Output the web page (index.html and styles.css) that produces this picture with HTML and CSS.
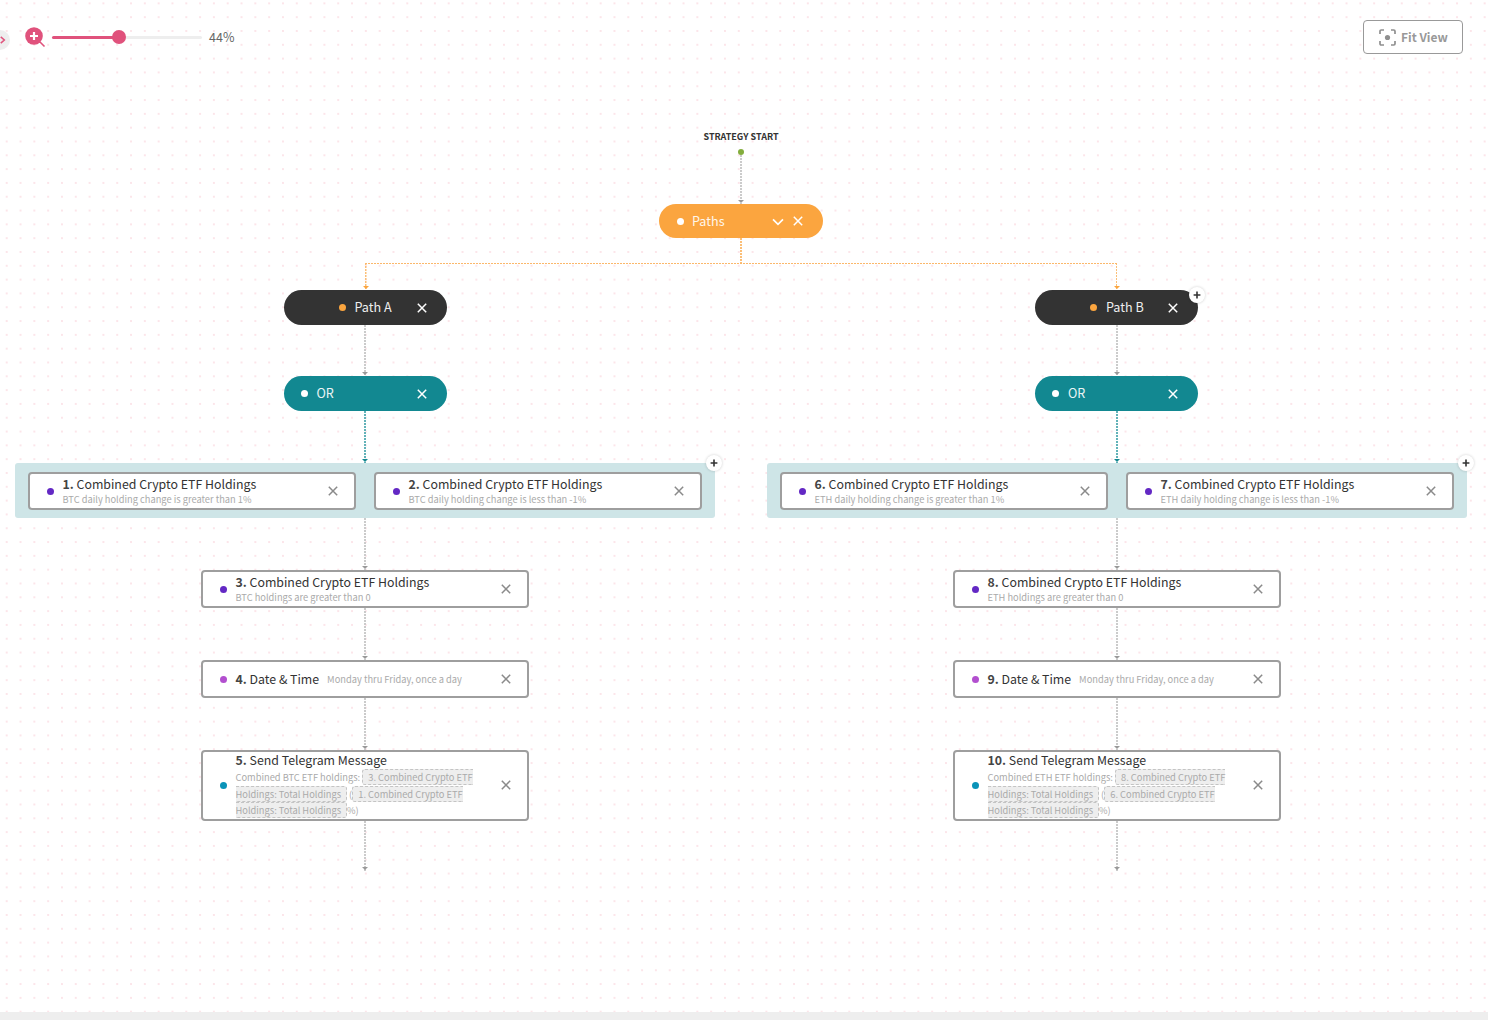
FILE: index.html
```html
<!DOCTYPE html>
<html lang="en">
<head>
<meta charset="utf-8">
<title>Strategy</title>
<link rel="stylesheet" href="styles.css">
</head>
<body>
<svg class="defs" width="0" height="0" aria-hidden="true">
  <symbol id="i-x" viewBox="0 0 10 10"><path d="M.8.8l8.4 8.4M9.2.8L.8 9.2" fill="none" stroke="currentColor" stroke-width="1.5"/></symbol>
  <symbol id="i-plus" viewBox="0 0 8 8"><path d="M4 .6v6.8M.6 4h6.8" fill="none" stroke="currentColor" stroke-width="1.6"/></symbol>
</svg>
<main class="canvas">
  <header class="toolbar">
    <div class="zoom">
      <span class="collapse"><svg width="8" height="10" viewBox="0 0 8 10"><path d="M1 .8l4.800 4.200-4.800 4.200" fill="none" stroke="#e0527c" stroke-width="2"/></svg></span>
      <svg class="zoom-icon" width="22" height="22" viewBox="0 0 22 22"><circle cx="10" cy="10" r="8.8" fill="#e0527c"/><path d="M10 6v8M6 10h8" stroke="#fff" stroke-width="2.2"/><path d="M16 16l4.500 4.500" stroke="#e0527c" stroke-width="1.6"/></svg>
      <div class="slider"><div class="slider-fill"></div><div class="slider-thumb"></div></div>
      <span class="zoom-value">44%</span>
    </div>
    <button class="fit"><svg width="17" height="17" viewBox="0 0 17 17"><path d="M1 5V2.200C1 1.500 1.500 1 2.200 1H5M12 1h2.800C15.500 1 16 1.500 16 2.200V5M16 12v2.800c0 .7-.5 1.200-1.200 1.200H12M5 16H2.200C1.500 16 1 15.500 1 14.800V12" fill="none" stroke="#8f8f8f" stroke-width="1.700"/><circle cx="8.500" cy="8.500" r="2.600" fill="#8f8f8f"/></svg><span class="fit-text">Fit View</span></button>
  </header>

  <div class="tree">
    <div class="start-label">STRATEGY START</div>
    <div class="start-dot"></div>
    <div class="link link-start"></div>
    <div class="pill pill-paths">
      <span class="dot dot-white"></span><span class="pill-text">Paths</span>
      <svg class="chev" width="12" height="8" viewBox="0 0 12 8"><path d="M1 1.300l5 5 5-5" fill="none" stroke="#fff" stroke-width="1.700"/></svg>
      <svg class="x x-white"><use href="#i-x"/></svg>
    </div>
    <div class="link link-orange"></div>
    <div class="fork"></div>
    <div class="branches">

      <section class="branch">
        <div class="pill pill-path">
          <span class="dot dot-orange"></span><span class="pill-text">Path A</span>
          <svg class="x x-white"><use href="#i-x"/></svg>
        </div>
        <div class="link link-a"></div>
        <div class="pill pill-or">
          <span class="dot dot-white"></span><span class="pill-text">OR</span>
          <svg class="x x-white"><use href="#i-x"/></svg>
        </div>
        <div class="link link-teal"></div>
        <div class="group">
          <article class="card">
            <span class="dot dot-purple"></span>
            <div class="body"><div class="title"><b>1.</b> Combined Crypto ETF Holdings</div><div class="sub">BTC daily holding change is greater than 1%</div></div>
            <svg class="x"><use href="#i-x"/></svg>
          </article>
          <article class="card">
            <span class="dot dot-purple"></span>
            <div class="body"><div class="title"><b>2.</b> Combined Crypto ETF Holdings</div><div class="sub">BTC daily holding change is less than -1%</div></div>
            <svg class="x"><use href="#i-x"/></svg>
          </article>
          <button class="add add-group"><svg width="8" height="8"><use href="#i-plus"/></svg></button>
        </div>
        <div class="link"></div>
        <article class="card">
          <span class="dot dot-purple"></span>
          <div class="body"><div class="title"><b>3.</b> Combined Crypto ETF Holdings</div><div class="sub">BTC holdings are greater than 0</div></div>
          <svg class="x"><use href="#i-x"/></svg>
        </article>
        <div class="link"></div>
        <article class="card">
          <span class="dot dot-violet"></span>
          <div class="body body-row"><div class="title"><b>4.</b> Date &amp; Time</div><div class="sub">Monday thru Friday, once a day</div></div>
          <svg class="x"><use href="#i-x"/></svg>
        </article>
        <div class="link"></div>
        <article class="card card-tall">
          <span class="dot dot-blue"></span>
          <div class="body body-msg"><div class="title"><b>5.</b> Send Telegram Message</div><div class="sub sub-msg">Combined BTC ETF holdings: <span class="chip">3. Combined Crypto ETF Holdings: Total Holdings</span> (<span class="chip">1. Combined Crypto ETF Holdings: Total Holdings</span>%)</div></div>
          <svg class="x"><use href="#i-x"/></svg>
        </article>
        <div class="link link-end"></div>
      </section>

      <section class="branch branch-b">
        <div class="pill pill-path">
          <span class="dot dot-orange"></span><span class="pill-text">Path B</span>
          <svg class="x x-white"><use href="#i-x"/></svg>
          <button class="add add-pill"><svg width="8" height="8"><use href="#i-plus"/></svg></button>
        </div>
        <div class="link link-a"></div>
        <div class="pill pill-or">
          <span class="dot dot-white"></span><span class="pill-text">OR</span>
          <svg class="x x-white"><use href="#i-x"/></svg>
        </div>
        <div class="link link-teal"></div>
        <div class="group">
          <article class="card">
            <span class="dot dot-purple"></span>
            <div class="body"><div class="title"><b>6.</b> Combined Crypto ETF Holdings</div><div class="sub">ETH daily holding change is greater than 1%</div></div>
            <svg class="x"><use href="#i-x"/></svg>
          </article>
          <article class="card">
            <span class="dot dot-purple"></span>
            <div class="body"><div class="title"><b>7.</b> Combined Crypto ETF Holdings</div><div class="sub">ETH daily holding change is less than -1%</div></div>
            <svg class="x"><use href="#i-x"/></svg>
          </article>
          <button class="add add-group"><svg width="8" height="8"><use href="#i-plus"/></svg></button>
        </div>
        <div class="link"></div>
        <article class="card">
          <span class="dot dot-purple"></span>
          <div class="body"><div class="title"><b>8.</b> Combined Crypto ETF Holdings</div><div class="sub">ETH holdings are greater than 0</div></div>
          <svg class="x"><use href="#i-x"/></svg>
        </article>
        <div class="link"></div>
        <article class="card">
          <span class="dot dot-violet"></span>
          <div class="body body-row"><div class="title"><b>9.</b> Date &amp; Time</div><div class="sub">Monday thru Friday, once a day</div></div>
          <svg class="x"><use href="#i-x"/></svg>
        </article>
        <div class="link"></div>
        <article class="card card-tall">
          <span class="dot dot-blue"></span>
          <div class="body body-msg"><div class="title"><b>10.</b> Send Telegram Message</div><div class="sub sub-msg">Combined ETH ETF holdings: <span class="chip">8. Combined Crypto ETF Holdings: Total Holdings</span> (<span class="chip">6. Combined Crypto ETF Holdings: Total Holdings</span>%)</div></div>
          <svg class="x"><use href="#i-x"/></svg>
        </article>
        <div class="link link-end"></div>
      </section>

    </div>
  </div>
</main>
<div class="bottom-bar"></div>
</body>
</html>
```
FILE: styles.css
```css
* { box-sizing: border-box; }
html, body { margin: 0; height: 100%; overflow: hidden; }
body {
  display: flex;
  flex-direction: column;
  height: 1020px;
  background: #fff;
  font-family: "Noto Sans CJK SC", "Noto Sans", sans-serif;
  color: #333;
}
.defs { position: absolute; }
.canvas {
  flex: 1;
  min-height: 0;
  overflow: hidden;
  background-image: radial-gradient(circle at center, #f9cfd9 0, #fbdde3 .6px, transparent 1px);
  background-size: 13.82px 13.82px;
  background-position: -.2px -3.55px;
}
.bottom-bar { height: 8px; background: #eee; }

/* toolbar */
.toolbar {
  display: flex;
  justify-content: space-between;
  align-items: center;
  height: 34px;
  margin-top: 20px;
  padding-right: 25px;
}
.zoom { display: flex; align-items: center; }
.collapse {
  display: flex;
  align-items: center;
  justify-content: flex-end;
  width: 10px;
  height: 20px;
  padding-right: 4px;
  background: #eee;
  border-radius: 0 10px 10px 0;
  transform: translateY(3px);
}
.zoom-icon { margin-left: 14px; }
.slider {
  position: relative;
  width: 150px;
  height: 3px;
  margin-left: 6px;
  background: #eee;
  border-radius: 2px;
}
.slider-fill { width: 67px; height: 3px; background: #e0527c; border-radius: 2px; }
.slider-thumb {
  position: absolute;
  left: 60px;
  top: -6px;
  width: 14px;
  height: 14px;
  border-radius: 50%;
  background: #e0527c;
}
.zoom-value { margin: 0 0 2px 7px; font-size: 12.500px; color: #666; }
.fit {
  display: flex;
  align-items: center;
  gap: 5px;
  width: 100px;
  height: 34px;
  padding: 0 0 0 15px;
  background: #fff;
  border: 1.500px solid #999;
  border-radius: 4px;
  font: 600 12px "Noto Sans CJK SC", "Noto Sans", sans-serif;
  color: #999;
}
.fit-text { margin-bottom: 2px; }

/* tree */
.tree {
  display: flex;
  flex-direction: column;
  align-items: center;
  width: 1452px;
  margin-left: 15px;
}
.start-label {
  margin-top: 76px;
  height: 13px;
  line-height: 13px;
  font-size: 9px;
  font-weight: 600;
  color: #333;
}
.start-dot {
  width: 6px;
  height: 6px;
  margin-top: 6px;
  border-radius: 50%;
  background: #83ad3c;
}
.branches { display: flex; gap: 52px; }
.branch { display: flex; flex-direction: column; align-items: center; width: 700px; }
.branch-b > .pill { margin-left: -1px; }

/* connectors */
.link {
  position: relative;
  flex: none;
  width: 2px;
  height: 52px;
  --line: #cbcbcb;
  --arrow: #999;
  background: repeating-linear-gradient(to bottom, var(--line) 0 2px, transparent 2px 3px);
}
.link::after {
  content: "";
  position: absolute;
  left: -2px;
  bottom: 1px;
  border-style: solid;
  border-width: 3px 3px 0;
  border-color: var(--arrow) transparent transparent;
}
.link-start { height: 49px; }
.link-a { height: 51px; }
.link-end { height: 50px; }
.link-teal { --line: #62b2b8; --arrow: #12878f; }
.link-orange { height: 25px; --line: #fbbf78; }
.link-orange::after { display: none; }
.fork {
  position: relative;
  flex: none;
  width: 752px;
  height: 27px;
  background:
    repeating-linear-gradient(to right, #fbb86b 0 2px, transparent 2px 3px) top / 100% 1px no-repeat,
    repeating-linear-gradient(to bottom, #fbbf78 0 2px, transparent 2px 3px) left top / 1.500px 100% no-repeat,
    repeating-linear-gradient(to bottom, #fbbf78 0 2px, transparent 2px 3px) right top / 1.500px 100% no-repeat;
}
.fork::before, .fork::after {
  content: "";
  position: absolute;
  bottom: 1px;
  border-style: solid;
  border-width: 3px 3px 0;
  border-color: #fba53f transparent transparent;
}
.fork::before { left: -2.500px; }
.fork::after { right: -2.500px; }

/* pills */
.pill {
  position: relative;
  display: flex;
  align-items: center;
  flex: none;
  width: 163px;
  height: 35px;
  border-radius: 18px;
  font-size: 12.600px;
  color: #fff;
}
.pill .x { position: absolute; right: 20px; top: 12.500px; }
.pill-text { line-height: 20px; }
.pill .dot { margin-right: 8px; }
.pill-paths { width: 164px; height: 34px; padding-left: 18px; background: #fba53f; color: #fff6ea; }
.pill-paths .x { right: 20px; top: 12px; }
.chev { position: absolute; right: 39px; top: 14px; }
.pill-path { padding-left: 55px; background: #333; color: #eee; }
.pill-or { padding-left: 17px; background: #128891; color: #eaf4f5; }
.pill-path .pill-text, .pill-or .pill-text { margin: 0 0 2px 1px; }

.dot { flex: none; width: 7px; height: 7px; border-radius: 50%; }
.dot-white { background: #fff; }
.dot-orange { background: #fba53f; }
.dot-purple { background: #6328c4; }
.dot-violet { background: #b24fcf; }
.dot-blue { background: #0a93b8; }

.x { flex: none; width: 10px; height: 10px; color: #8a8a8a; }
.x-white { color: #fff; }

/* cards */
.group {
  position: relative;
  display: flex;
  gap: 18px;
  flex: none;
  width: 700px;
  height: 55px;
  padding: 9px 13px 0;
  background: #cee5e7;
  border-radius: 3px;
}
.card {
  display: flex;
  align-items: center;
  flex: none;
  width: 328px;
  height: 38px;
  padding: 0 16px 0 17px;
  background: #fff;
  border: 2px solid #9e9e9e;
  border-radius: 4px;
}
.card > .dot { margin-right: 8.500px; }
.body { flex: 1; min-width: 0; padding-top: 1px; }
.body-row { display: flex; align-items: center; gap: 8px; padding-top: 0; }
.body-msg { padding-top: 0; }
.title { font-size: 12.350px; line-height: 16px; color: #333; white-space: nowrap; }
.title b { font-weight: 700; color: #444; }
.sub { font-size: 9.300px; line-height: 15px; color: #aaa; white-space: nowrap; }
.card-tall { height: 71px; }
.card-tall > .x { margin-bottom: 1px; }
.sub-msg { width: 240px; margin-top: 1px; line-height: 16.500px; white-space: normal; }
.chip {
  padding: 0 5px;
  background: #eee;
  border: 1px dashed #c4c4c4;
  border-radius: 3px;
}

/* add buttons */
.add {
  position: absolute;
  display: flex;
  align-items: center;
  justify-content: center;
  width: 16px;
  height: 16px;
  padding: 0;
  border: 0;
  border-radius: 50%;
  background: #fff;
  color: #333;
  box-shadow: 0 0 3px rgba(0, 0, 0, .2);
}
.add-group { right: -7px; top: -8px; }
.add-pill { right: -7px; top: -3px; }
```
